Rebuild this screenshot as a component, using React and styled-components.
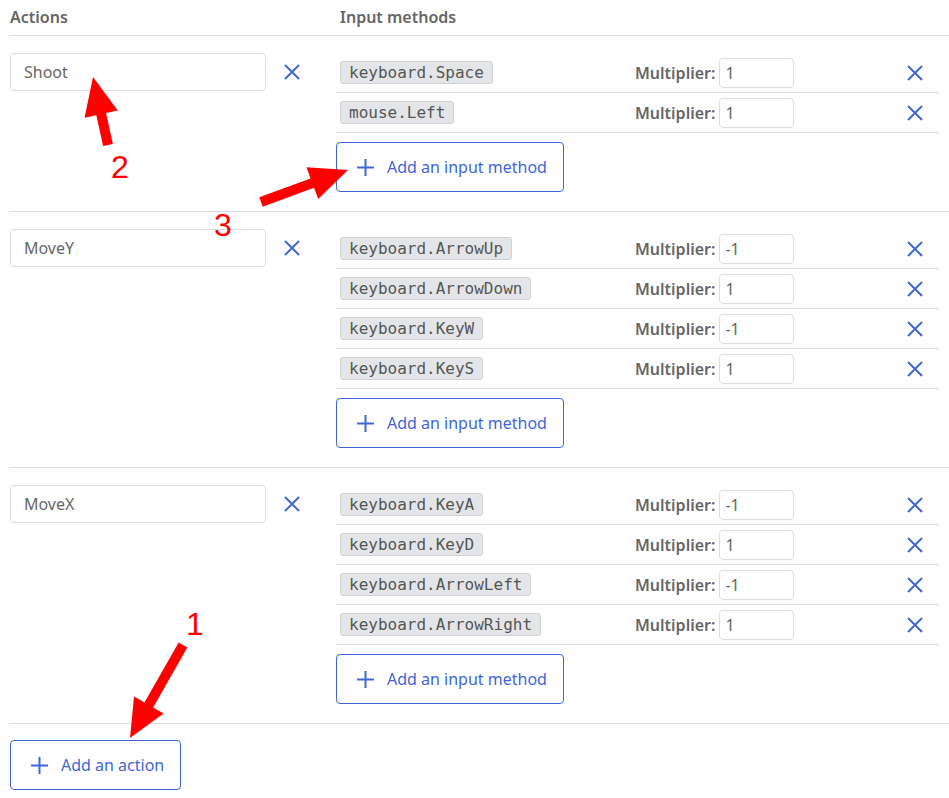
import React from 'react';
import styled, { createGlobalStyle } from 'styled-components';

const GlobalStyle = createGlobalStyle`
  html, body {
    margin: 0;
    padding: 0;
    background: #fff;
    overflow: hidden;
  }
  body {
    font-family: "Noto Sans", "Open Sans", sans-serif;
    color: #555;
  }
`;

const BLUE = '#3f66d9';

const Page = styled.div`
  position: relative;
  width: 949px;
  height: 798px;
  padding-left: 10px;
  box-sizing: border-box;
`;

const Table = styled.div`
  width: 960px;
`;

const HeaderRow = styled.div`
  display: grid;
  grid-template-columns: 330px 1fr;
  height: 36px;
  border-bottom: 1px solid #dcdcdc;
  box-sizing: border-box;
`;

const HeaderCell = styled.div`
  font-size: 16px;
  font-weight: 600;
  color: #666;
  line-height: 35px;
`;

const Group = styled.div`
  display: grid;
  grid-template-columns: 326px 603px;
  padding: 17px 0 19px;
  border-bottom: 1px solid #dcdcdc;
`;

const ActionCell = styled.div`
  display: flex;
  align-items: flex-start;
`;

const TextInput = styled.input`
  font-family: inherit;
  font-size: 16px;
  color: #666;
  width: ${p => p.$width}px;
  height: ${p => p.$height}px;
  padding: 0 ${p => p.$pad}px;
  border: 1px solid #ddd;
  border-radius: 4px;
  box-sizing: border-box;
  outline: none;
  background: #fff;
`;

const IconButton = styled.button`
  display: flex;
  align-items: center;
  justify-content: center;
  width: 26px;
  height: 38px;
  border: none;
  background: none;
  padding: 0;
  margin-left: 13px;
  cursor: pointer;
`;

const Methods = styled.div`
  display: flex;
  flex-direction: column;
  align-items: flex-start;
`;

const MethodRow = styled.div`
  display: grid;
  grid-template-columns: 295px auto 75px 1fr;
  align-items: center;
  width: 603px;
  height: 40px;
  padding-left: 4px;
  box-sizing: border-box;
  border-bottom: 1px solid #dcdcdc;
`;

const Chip = styled.code`
  justify-self: start;
  font-family: "DejaVu Sans Mono", monospace;
  font-size: 16px;
  color: #555;
  background: #e4e5e8;
  border: 1px solid #cfd1d5;
  border-radius: 3px;
  padding: 0 8px;
  line-height: 21px;
`;

const Label = styled.span`
  font-size: 16px;
  font-weight: 600;
  color: #666;
  padding-right: 4px;
`;

const RemoveCell = styled.div`
  display: flex;
  justify-content: flex-end;
  padding-right: 16px;
`;

const AddButton = styled.button`
  display: flex;
  align-items: center;
  gap: 13px;
  height: 50px;
  padding: 0 16px 0 20px;
  margin-top: ${p => p.$top}px;
  border: 1px solid ${BLUE};
  border-radius: 4px;
  background: #fff;
  color: ${BLUE};
  font-family: inherit;
  font-size: 16px;
  cursor: pointer;
`;

const Footer = styled.div`
  padding-top: 16px;
`;

const Overlay = styled.svg`
  position: absolute;
  left: 0;
  top: 0;
  pointer-events: none;
`;

const CloseIcon = () => (
  <svg width="16" height="16" viewBox="0 0 16 16">
    <path d="M1 1 L15 15 M15 1 L1 15" stroke={BLUE} strokeWidth="2" fill="none" />
  </svg>
);

const PlusIcon = () => (
  <svg width="17" height="17" viewBox="0 0 17 17">
    <path d="M8.5 0 V17 M0 8.5 H17" stroke={BLUE} strokeWidth="2" fill="none" />
  </svg>
);

const arrowPoints = ([tx, ty], [hx, hy], shaft, head, headLen) => {
  const dx = hx - tx;
  const dy = hy - ty;
  const len = Math.hypot(dx, dy);
  const ux = dx / len;
  const uy = dy / len;
  const nx = -uy;
  const ny = ux;
  const bx = hx - ux * headLen;
  const by = hy - uy * headLen;
  const pts = [
    [tx + nx * shaft / 2, ty + ny * shaft / 2],
    [bx + nx * shaft / 2, by + ny * shaft / 2],
    [bx + nx * head / 2, by + ny * head / 2],
    [hx, hy],
    [bx - nx * head / 2, by - ny * head / 2],
    [bx - nx * shaft / 2, by - ny * shaft / 2],
    [tx - nx * shaft / 2, ty - ny * shaft / 2],
  ];
  return pts.map(p => p.join(',')).join(' ');
};

const annotations = [
  { tail: [108, 145], tip: [93, 77], label: '2', lx: 120, ly: 178 },
  { tail: [261, 202], tip: [348, 170], label: '3', lx: 223, ly: 236 },
  { tail: [183, 645], tip: [130, 738], label: '1', lx: 195, ly: 635 },
];

const actions = [
  {
    name: 'Shoot',
    inputs: [
      { key: 'keyboard.Space', mult: '1' },
      { key: 'mouse.Left', mult: '1' },
    ],
  },
  {
    name: 'MoveY',
    inputs: [
      { key: 'keyboard.ArrowUp', mult: '-1' },
      { key: 'keyboard.ArrowDown', mult: '1' },
      { key: 'keyboard.KeyW', mult: '-1' },
      { key: 'keyboard.KeyS', mult: '1' },
    ],
  },
  {
    name: 'MoveX',
    inputs: [
      { key: 'keyboard.KeyA', mult: '-1' },
      { key: 'keyboard.KeyD', mult: '1' },
      { key: 'keyboard.ArrowLeft', mult: '-1' },
      { key: 'keyboard.ArrowRight', mult: '1' },
    ],
  },
];

const App = () => (
  <Page>
    <GlobalStyle />
    <Table>
      <HeaderRow>
        <HeaderCell>Actions</HeaderCell>
        <HeaderCell>Input methods</HeaderCell>
      </HeaderRow>
      {actions.map(action => (
        <Group key={action.name}>
          <ActionCell>
            <TextInput defaultValue={action.name} $width={256} $height={38} $pad={13} />
            <IconButton>
              <CloseIcon />
            </IconButton>
          </ActionCell>
          <Methods>
            {action.inputs.map(input => (
              <MethodRow key={input.key}>
                <Chip>{input.key}</Chip>
                <Label>Multiplier:</Label>
                <TextInput defaultValue={input.mult} $width={75} $height={30} $pad={5} />
                <RemoveCell>
                  <CloseIcon />
                </RemoveCell>
              </MethodRow>
            ))}
            <AddButton $top={9}>
              <PlusIcon />
              Add an input method
            </AddButton>
          </Methods>
        </Group>
      ))}
      <Footer>
        <AddButton $top={0}>
          <PlusIcon />
          Add an action
        </AddButton>
      </Footer>
    </Table>
    <Overlay width="949" height="798">
      {annotations.map(a => (
        <g key={a.label}>
          <polygon points={arrowPoints(a.tail, a.tip, 10, 34, 38)} fill="#ff0000" />
          <text
            x={a.lx}
            y={a.ly}
            fill="#ff0000"
            fontSize="32"
            fontFamily="Liberation Sans, sans-serif"
            textAnchor="middle"
          >
            {a.label}
          </text>
        </g>
      ))}
    </Overlay>
  </Page>
);

export default App;
